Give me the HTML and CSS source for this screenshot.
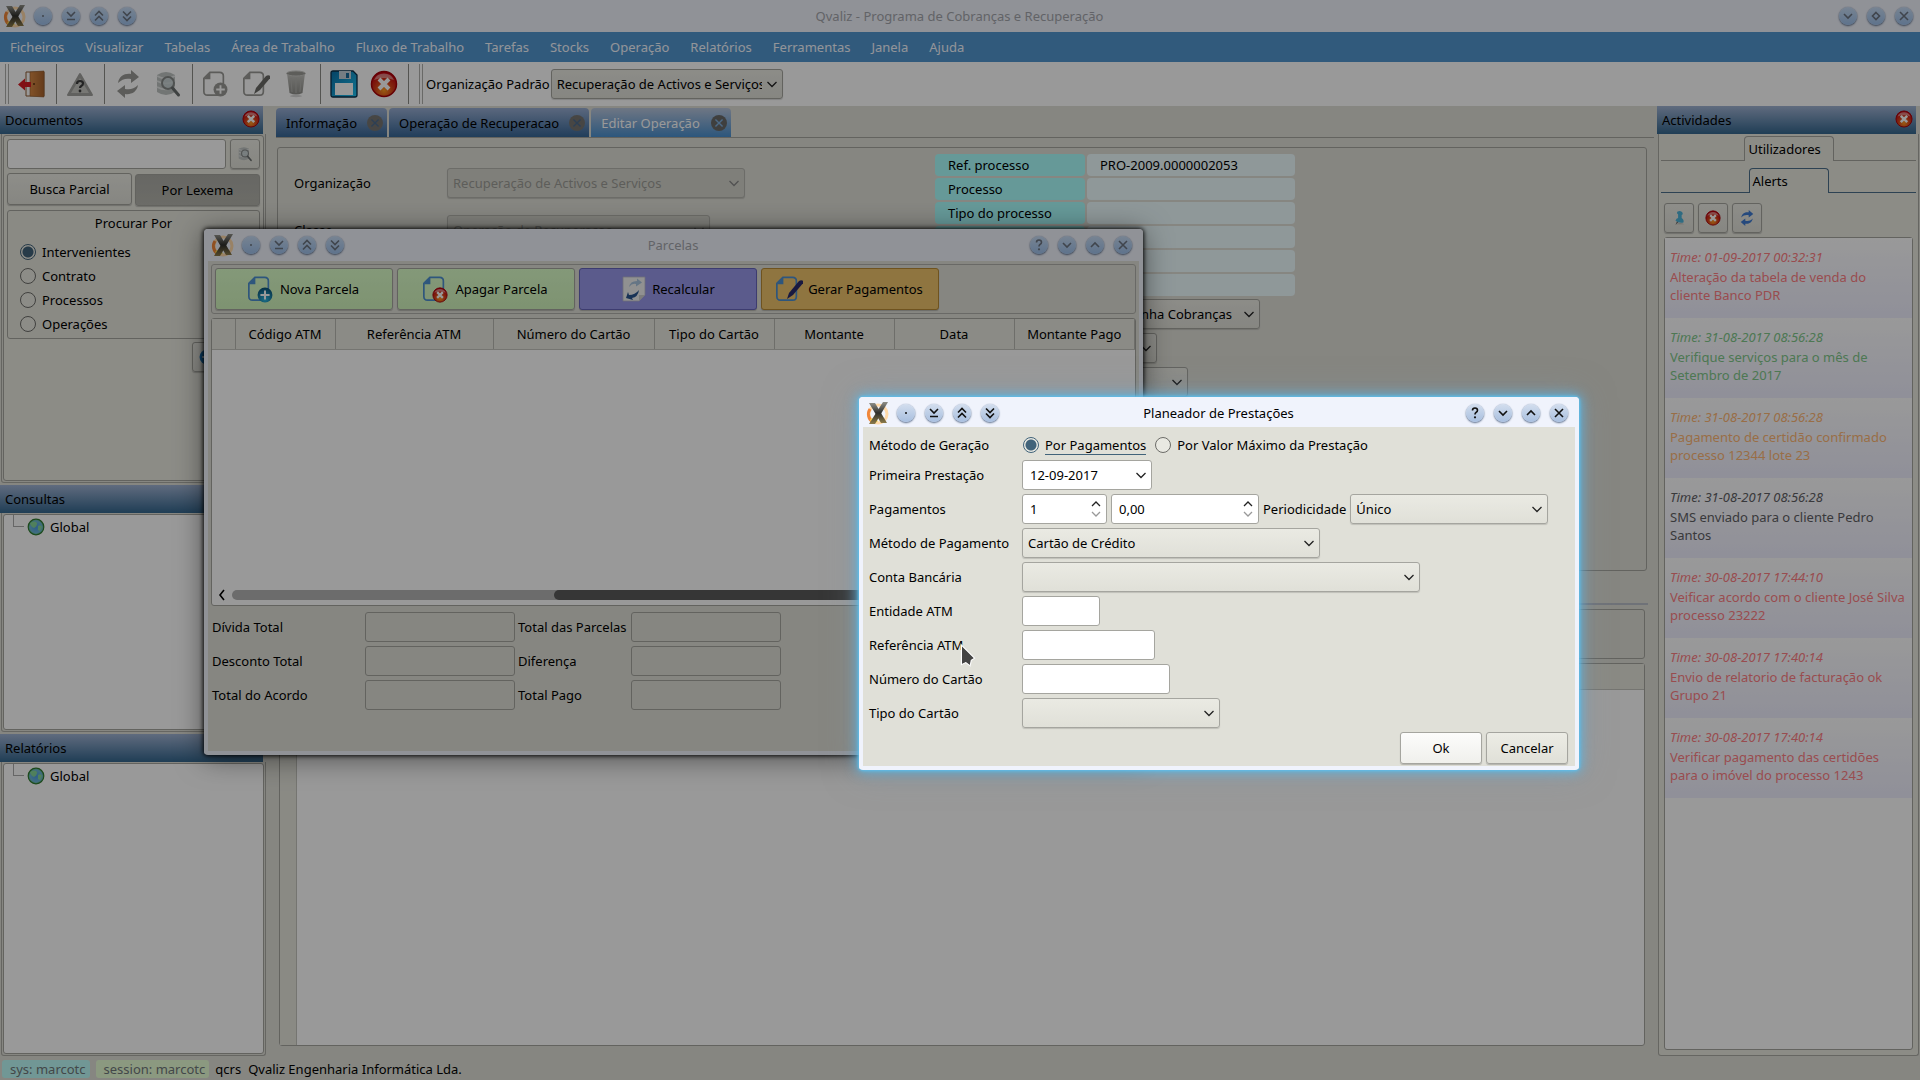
FILE: index.html
```html
<!DOCTYPE html>
<html lang="pt">
<head>
<meta charset="utf-8">
<title>Qvaliz - Programa de Cobranças e Recuperação</title>
<link rel="stylesheet" href="styles.css">
</head>
<body>
<svg class="sprite" aria-hidden="true">
  <defs>
    <linearGradient id="g-door" x1="0" x2="1"><stop offset="0" stop-color="#d98a45"/><stop offset="1" stop-color="#a8632c"/></linearGradient>
    <linearGradient id="g-grey" x1="0" y1="0" x2="0" y2="1"><stop offset="0" stop-color="#c4c4c0"/><stop offset="1" stop-color="#8f8f8b"/></linearGradient>
    <linearGradient id="g-save" x1="0" y1="0" x2="1" y2="1"><stop offset="0" stop-color="#0a6fa8"/><stop offset="1" stop-color="#1fc4f2"/></linearGradient>
    <radialGradient id="g-red" cx=".5" cy=".75" r=".7"><stop offset="0" stop-color="#ff9a20"/><stop offset=".5" stop-color="#d8401a"/><stop offset="1" stop-color="#c00010"/></radialGradient>
    <radialGradient id="g-plus" cx=".5" cy=".8" r=".8"><stop offset="0" stop-color="#2fb8e0"/><stop offset="1" stop-color="#0a4f74"/></radialGradient>
    <linearGradient id="g-x" x1="0" y1="0" x2="0" y2="1"><stop offset="0" stop-color="#8f8f88"/><stop offset=".5" stop-color="#2f2f2c"/><stop offset="1" stop-color="#8c7b4a"/></linearGradient>
    <radialGradient id="g-globe" cx=".5" cy=".5" r=".6"><stop offset="0" stop-color="#4b9be8"/><stop offset=".6" stop-color="#6ab4d8"/><stop offset="1" stop-color="#5cc050"/></radialGradient>
  </defs>
  <symbol id="logo" viewBox="0 0 24 24"><circle cx="12" cy="13" r="9" fill="none" stroke="#ffd9a8" stroke-width="3"/><path d="M4 8a9 9 0 0 0 3 13" fill="none" stroke="#f0863a" stroke-width="3"/><path d="M5 18l3 3 3-2" fill="none" stroke="#f8d84a" stroke-width="3"/><path d="M3 2h6l12 20h-6z" fill="url(#g-x)"/><path d="M17 1h5L9 23H3z" fill="url(#g-x)"/></symbol>
  <symbol id="w-dot" viewBox="0 0 18 18"><circle cx="9" cy="9" r="1" fill="currentColor"/></symbol>
  <symbol id="w-keep" viewBox="0 0 18 18"><path d="M5 5l4 4 4-4M5 12.500h8" class="ln"/></symbol>
  <symbol id="w-up2" viewBox="0 0 18 18"><path d="M5 8.500l4-4 4 4M5 13.500l4-4 4 4" class="ln"/></symbol>
  <symbol id="w-down2" viewBox="0 0 18 18"><path d="M5 4.500l4 4 4-4M5 9.500l4 4 4-4" class="ln"/></symbol>
  <symbol id="w-help" viewBox="0 0 18 18"><path d="M6.500 6.500q0-2.500 2.500-2.500t2.500 2.300q0 1.500-1.500 2.200-1 .7-1 2" class="ln"/><circle cx="9" cy="13.300" r="1.100" fill="currentColor"/></symbol>
  <symbol id="w-down" viewBox="0 0 18 18"><path d="M5 7l4 4 4-4" class="ln"/></symbol>
  <symbol id="w-up" viewBox="0 0 18 18"><path d="M5 11l4-4 4 4" class="ln"/></symbol>
  <symbol id="w-rest" viewBox="0 0 18 18"><path d="M9 5.500l3.500 3.500-3.500 3.500-3.500-3.500z" class="ln"/></symbol>
  <symbol id="w-close" viewBox="0 0 18 18"><path d="M5 5l8 8M13 5l-8 8" class="ln"/></symbol>
  <symbol id="exit" viewBox="0 0 28 28"><path d="M8 2h18v24H8z" fill="#fff" stroke="#8e5a30"/><path d="M12 2l14-1v26l-14-1z" fill="url(#g-door)" stroke="#8e5a30" stroke-width=".6"/><circle cx="16" cy="14" r="1" fill="#5a3010"/><path d="M0 14.500l7-6v3.500h6v5H7v3.500z" fill="#d81c24"/></symbol>
  <symbol id="warn" viewBox="0 0 28 28"><path d="M14 4L26 25H2z" fill="#a2a29e" stroke="#a2a29e" stroke-width="2" stroke-linejoin="round"/><path d="M14 8L23 23H5z" fill="#c6c6c2"/><path d="M11 14q0-3 3-3t3 2.600q0 1.600-1.700 2.400-1.300.8-1.300 2" fill="none" stroke="#3c3c3c" stroke-width="2.200"/><circle cx="14" cy="21" r="1.400" fill="#3c3c3c"/></symbol>
  <symbol id="sync" viewBox="0 0 28 28"><path d="M4 13C5 6 11 3 17 4V0l8 7-8 6V9c-5-1-9 0-13 4z"/><path d="M24 15c-1 7-7 10-13 9v4l-8-7 8-6v4c5 1 9 0 13-4z"/></symbol>
  <symbol id="db" viewBox="0 0 28 28"><path d="M3 5q9-6 18 0v17q-9 6-18 0z" fill="#bfc3c2"/><path d="M3 11q9 5 18 0M3 17q9 5 18 0M3 6q9 5 18 0" fill="none" stroke="#e4e7e6" stroke-width="1.500"/><circle cx="14" cy="13" r="6" fill="#c9d5d6" fill-opacity=".8" stroke="#858988" stroke-width="2"/><path d="M18.500 18l6 7" stroke="#6a6e6e" stroke-width="3" stroke-linecap="round"/></symbol>
  <symbol id="page" viewBox="0 0 28 28"><path d="M8.500 1.500H19q4 0 4 4V22q0 4-4 4H6q-4 0-4-4V8z" fill="none" stroke="currentColor" stroke-width="1.800"/><path d="M9 1v8H2z" fill="currentColor"/></symbol>
  <symbol id="pen" viewBox="0 0 28 28"><path d="M12 24l2-6L24 6q3-2 5 1L18 20z"/></symbol>
  <symbol id="trash" viewBox="0 0 28 28"><path d="M5 3h18l-2.500 20q-6.500 3-13 0z" fill="url(#g-grey)"/><ellipse cx="14" cy="3.500" rx="9.500" ry="2.500" fill="#9b9b97" stroke="#c9c9c5"/><path d="M9 8l1 14M14 8v15M19 8l-1 14" stroke="#b4b4b0" fill="none"/><ellipse cx="14" cy="26" rx="6" ry="1.200" fill="#d8d8d8"/></symbol>
  <symbol id="save" viewBox="0 0 28 28"><path d="M3 1h20l4 4v20q0 2-2 2H3q-2 0-2-2V3q0-2 2-2z" fill="url(#g-save)" stroke="#0b2f4a" stroke-width="1.300"/><path d="M9 1h12v8H9z" fill="#c5d0da"/><path d="M16 3h3v5h-3z" fill="#1c6a9a"/><path d="M5 13h18v12H5z" fill="#fff"/></symbol>
  <symbol id="stop" viewBox="0 0 28 28"><circle cx="14" cy="14" r="12.500" fill="url(#g-red)" stroke="#a80008" stroke-width="1.500"/><path d="M4 10a11 11 0 0 1 20 0q-10-4-20 0z" fill="#fff" opacity=".45"/><path d="M9 9l10 10M19 9L9 19" stroke="#fff" stroke-width="4"/></symbol>
  <symbol id="plus" viewBox="0 0 28 28"><circle cx="14" cy="14" r="13"/><path d="M14 6v16M6 14h16" stroke="#fff" stroke-width="3.500"/></symbol>
  <symbol id="recalc" viewBox="0 0 28 28"><path d="M4 2h22v18l-6 6H4z" fill="#f2f2f2" stroke="#b8b8c8" stroke-width=".8"/><path d="M20 26v-6h6z" fill="#cfcfcf"/><path d="M10 12q1-6 8-6V3.500l5 4-6 4V9q-4-1-7 3z" fill="#a9c3de"/><path d="M20 15q-1 7-7 8l1 2-7-2 2-6 1 3q6 0 10-5z" fill="#2a5590"/></symbol>
  <symbol id="pin" viewBox="0 0 18 18"><path d="M5 17l2-5 2 1z" fill="#666"/><path d="M6 16q4-2 9 0z" fill="#b4b4ae"/><path d="M7 2q4-2 6 1 1 2-1 2.500V9q3 2 2 5-5 1-9-2 1-3 3-3V5Q6 4 7 2z" fill="#4db2d8"/></symbol>
  <symbol id="globe" viewBox="0 0 18 18"><circle cx="9" cy="9" r="7.800" fill="url(#g-globe)" stroke="#2f7a2f" stroke-width="1.200"/><path d="M3 5q5-3 7 0 0 4-3 5-3-1-4-5zM11 8q3-2 4 1l-2 4-2-1z" fill="#8fe08a" opacity=".8"/></symbol>
</svg>

<div class="desktop">
  <div class="app">
    <header class="titlebar">
      <svg class="logo"><use href="#logo"/></svg>
      <button class="wb" aria-label="Desktop"><svg><use href="#w-dot"/></svg></button>
      <button class="wb" aria-label="Manter abaixo"><svg><use href="#w-keep"/></svg></button>
      <button class="wb" aria-label="Manter acima"><svg><use href="#w-up2"/></svg></button>
      <button class="wb" aria-label="Enrolar"><svg><use href="#w-down2"/></svg></button>
      <h1 class="title">Qvaliz - Programa de Cobranças e Recuperação</h1>
      <span class="wb-space"></span>
      <button class="wb" aria-label="Minimizar"><svg><use href="#w-down"/></svg></button>
      <button class="wb" aria-label="Restaurar"><svg><use href="#w-rest"/></svg></button>
      <button class="wb" aria-label="Fechar"><svg><use href="#w-close"/></svg></button>
    </header>
    <nav class="menubar">
      <a href="#">Ficheiros</a><a href="#">Visualizar</a><a href="#">Tabelas</a><a href="#">Área de Trabalho</a><a href="#">Fluxo de Trabalho</a><a href="#">Tarefas</a><a href="#">Stocks</a><a href="#">Operação</a><a href="#">Relatórios</a><a href="#">Ferramentas</a><a href="#">Janela</a><a href="#">Ajuda</a>
    </nav>
    <div class="toolbar">
      <span class="handle"></span>
      <button class="tool" aria-label="Sair"><svg><use href="#exit"/></svg></button>
      <span class="sep"></span>
      <button class="tool" aria-label="Ajuda"><svg><use href="#warn"/></svg></button>
      <span class="sep"></span>
      <button class="tool grey" aria-label="Actualizar"><svg><use href="#sync"/></svg></button>
      <button class="tool" aria-label="Pesquisar"><svg><use href="#db"/></svg></button>
      <span class="sep"></span>
      <button class="tool grey" aria-label="Novo"><svg viewBox="0 0 28 28"><use href="#page" width="26" height="28"/><use href="#plus" x="11" y="12" width="15" height="15"/></svg></button>
      <button class="tool grey" aria-label="Editar"><svg viewBox="0 0 28 28"><use href="#page" width="26" height="28"/><use href="#pen" class="pen" width="28" height="28"/></svg></button>
      <button class="tool" aria-label="Apagar"><svg><use href="#trash"/></svg></button>
      <span class="sep"></span>
      <button class="tool" aria-label="Gravar"><svg><use href="#save"/></svg></button>
      <button class="tool" aria-label="Cancelar"><svg><use href="#stop"/></svg></button>
      <span class="sep"></span>
      <span class="handle"></span>
      <label for="org-padrao">Organização Padrão</label>
      <select id="org-padrao" class="w-org"><option>Recuperação de Activos e Serviços</option></select>
    </div>

    <div class="workspace">
      <aside class="docks">
        <section class="dock dock-docs">
          <h2 class="dock-title">Documentos <button class="dock-close" aria-label="Fechar"><svg><use href="#stop"/></svg></button></h2>
          <div class="frame"><div class="inner docs">
            <div class="search"><input type="text" aria-label="Pesquisa"><button class="btn icon-btn" aria-label="Pesquisar"><svg><use href="#db"/></svg></button></div>
            <div class="modes"><button class="btn">Busca Parcial</button><button class="btn pressed">Por Lexema</button></div>
            <div class="group" role="radiogroup" aria-labelledby="procurar">
              <p id="procurar" class="group-title">Procurar Por</p>
              <label class="radio"><input type="radio" name="por" checked>Intervenientes</label>
              <label class="radio"><input type="radio" name="por">Contrato</label>
              <label class="radio"><input type="radio" name="por">Processos</label>
              <label class="radio"><input type="radio" name="por">Operações</label>
            </div>
            <button class="btn go" aria-label="Procurar"><svg><use href="#plus"/></svg></button>
          </div></div>
        </section>
        <section class="dock dock-cons">
          <h2 class="dock-title">Consultas</h2>
          <div class="frame"><div class="inner tree"><span class="branch"></span><svg class="globe"><use href="#globe"/></svg>Global</div></div>
        </section>
        <section class="dock dock-rel">
          <h2 class="dock-title">Relatórios</h2>
          <div class="frame"><div class="inner tree"><span class="branch"></span><svg class="globe"><use href="#globe"/></svg>Global</div></div>
        </section>
      </aside>

      <main class="editor">
        <div class="tabs">
          <div class="tab">Informação <button class="tab-x" aria-label="Fechar separador"><svg><use href="#w-close"/></svg></button></div>
          <div class="tab">Operação de Recuperacao <button class="tab-x" aria-label="Fechar separador"><svg><use href="#w-close"/></svg></button></div>
          <div class="tab active">Editar Operação <button class="tab-x" aria-label="Fechar separador"><svg><use href="#w-close"/></svg></button></div>
        </div>
        <section class="form-box">
          <div class="form-left">
            <label for="organizacao">Organização</label>
            <select id="organizacao" class="w-298" disabled><option>Recuperação de Activos e Serviços</option></select>
            <label for="classe">Classe</label>
            <select id="classe" class="w-263" disabled><option>Operação de Recuperacao</option></select>
          </div>
          <div class="form-right">
            <dl class="refs">
              <dt>Ref. processo</dt><dd>PRO-2009.0000002053</dd>
              <dt>Processo</dt><dd></dd>
              <dt>Tipo do processo</dt><dd></dd>
              <dt></dt><dd></dd>
              <dt></dt><dd></dd>
              <dt></dt><dd></dd>
            </dl>
            <div class="stack">
              <select class="w-168" aria-label="Campanha"><option>Campanha Cobranças</option></select>
              <select class="w-65" aria-label="Estado"><option></option></select>
              <select class="w-96" aria-label="Fase"><option></option></select>
            </div>
          </div>
        </section>
        <div class="rule"></div>
        <div class="strip"></div>
        <div class="sheet"><div class="sheet-head"></div><div class="sheet-body"></div></div>
      </main>

      <aside class="dock activities">
        <h2 class="dock-title">Actividades <button class="dock-close" aria-label="Fechar"><svg><use href="#stop"/></svg></button></h2>
        <div class="frame act-body">
          <div class="toolbox"><button class="tb-tab tb-users">Utilizadores</button></div>
          <div class="toolbox on"><button class="tb-tab tb-alerts">Alerts</button></div>
          <div class="act-tools">
            <button class="btn icon-btn" aria-label="Fixar"><svg><use href="#pin"/></svg></button>
            <button class="btn icon-btn" aria-label="Remover"><svg><use href="#stop"/></svg></button>
            <button class="btn icon-btn blue" aria-label="Actualizar"><svg><use href="#sync"/></svg></button>
          </div>
          <ul class="alerts">
            <li class="red"><em>Time: 01-09-2017 00:32:31</em>Alteração da tabela de venda do cliente Banco PDR</li>
            <li class="green"><em>Time: 31-08-2017 08:56:28</em>Verifique serviços para o mês de Setembro de 2017</li>
            <li class="orange"><em>Time: 31-08-2017 08:56:28</em>Pagamento de certidão confirmado processo 12344 lote 23</li>
            <li class="dark"><em>Time: 31-08-2017 08:56:28</em>SMS enviado para o cliente Pedro Santos</li>
            <li class="red"><em>Time: 30-08-2017 17:44:10</em>Veificar acordo com o cliente José Silva processo 23222</li>
            <li class="red"><em>Time: 30-08-2017 17:40:14</em>Envio de relatorio de facturação ok Grupo 21</li>
            <li class="red"><em>Time: 30-08-2017 17:40:14</em>Verificar pagamento das certidões para o imóvel do processo 1243</li>
          </ul>
        </div>
      </aside>
    </div>

    <footer class="status">
      <span class="chip sys">sys: marcotc</span><span class="chip session">session: marcotc</span><span>qcrs</span><span>Qvaliz Engenharia Informática Lda.</span>
    </footer>
  </div>

  <section class="window parcelas" aria-label="Parcelas">
    <header class="titlebar">
      <svg class="logo"><use href="#logo"/></svg>
      <button class="wb" aria-label="Desktop"><svg><use href="#w-dot"/></svg></button>
      <button class="wb" aria-label="Manter abaixo"><svg><use href="#w-keep"/></svg></button>
      <button class="wb" aria-label="Manter acima"><svg><use href="#w-up2"/></svg></button>
      <button class="wb" aria-label="Enrolar"><svg><use href="#w-down2"/></svg></button>
      <h2 class="title">Parcelas</h2>
      <button class="wb" aria-label="Ajuda"><svg><use href="#w-help"/></svg></button>
      <button class="wb" aria-label="Minimizar"><svg><use href="#w-down"/></svg></button>
      <button class="wb" aria-label="Maximizar"><svg><use href="#w-up"/></svg></button>
      <button class="wb" aria-label="Fechar"><svg><use href="#w-close"/></svg></button>
    </header>
    <div class="window-body">
      <div class="actions">
        <button class="btn big lime"><svg viewBox="0 0 28 28"><use href="#page" width="26" height="28"/><use href="#plus" class="plus-blue" x="10" y="12" width="16" height="16"/></svg>Nova Parcela</button>
        <button class="btn big lime"><svg viewBox="0 0 28 28"><use href="#page" width="26" height="28"/><use href="#stop" x="10" y="12" width="16" height="16"/></svg>Apagar Parcela</button>
        <button class="btn big violet"><svg><use href="#recalc"/></svg>Recalcular</button>
        <button class="btn big amber"><svg viewBox="0 0 28 28"><use href="#page" width="26" height="28"/><use href="#pen" class="pen-navy" width="28" height="28"/></svg>Gerar Pagamentos</button>
      </div>
      <div class="grid-box">
        <table class="grid">
          <colgroup><col class="c-23"><col class="c-100"><col class="c-158"><col class="c-161"><col class="c-120"><col class="c-120"><col class="c-120"><col></colgroup>
          <thead><tr><th></th><th>Código ATM</th><th>Referência ATM</th><th>Número do Cartão</th><th>Tipo do Cartão</th><th>Montante</th><th>Data</th><th>Montante Pago</th></tr></thead>
        </table>
        <div class="scroll"><svg viewBox="0 0 10 14"><path d="M7 2L3 7l4 5" class="ln"/></svg><div class="track"><div class="thumb"></div></div></div>
      </div>
      <div class="totals">
        <label for="t1">Dívida Total</label><input id="t1" type="text" readonly>
        <label for="t2">Total das Parcelas</label><input id="t2" type="text" readonly>
        <label for="t3">Desconto Total</label><input id="t3" type="text" readonly>
        <label for="t4">Diferença</label><input id="t4" type="text" readonly>
        <label for="t5">Total do Acordo</label><input id="t5" type="text" readonly>
        <label for="t6">Total Pago</label><input id="t6" type="text" readonly>
      </div>
    </div>
  </section>

  <div class="backdrop"></div>

  <section class="window planner" role="dialog" aria-label="Planeador de Prestações">
    <header class="titlebar">
      <svg class="logo"><use href="#logo"/></svg>
      <button class="wb" aria-label="Desktop"><svg><use href="#w-dot"/></svg></button>
      <button class="wb" aria-label="Manter abaixo"><svg><use href="#w-keep"/></svg></button>
      <button class="wb" aria-label="Manter acima"><svg><use href="#w-up2"/></svg></button>
      <button class="wb" aria-label="Enrolar"><svg><use href="#w-down2"/></svg></button>
      <h2 class="title">Planeador de Prestações</h2>
      <button class="wb" aria-label="Ajuda"><svg><use href="#w-help"/></svg></button>
      <button class="wb" aria-label="Minimizar"><svg><use href="#w-down"/></svg></button>
      <button class="wb" aria-label="Maximizar"><svg><use href="#w-up"/></svg></button>
      <button class="wb" aria-label="Fechar"><svg><use href="#w-close"/></svg></button>
    </header>
    <form class="window-body plan">
      <div class="prow first"><span class="plabel">Método de Geração</span>
        <label class="radio focus"><input type="radio" name="metodo" checked><span>Por Pagamentos</span></label>
        <label class="radio"><input type="radio" name="metodo"><span>Por Valor Máximo da Prestação</span></label></div>
      <div class="prow"><label class="plabel" for="p-data">Primeira Prestação</label><input id="p-data" class="w-130 date" type="text" value="12-09-2017"></div>
      <div class="prow"><label class="plabel" for="p-num">Pagamentos</label>
        <input id="p-num" class="w-85 spin" type="text" value="1"><input class="w-148 spin" type="text" value="0,00" aria-label="Valor">
        <label for="p-per">Periodicidade</label><select id="p-per" class="w-198"><option>Único</option></select></div>
      <div class="prow"><label class="plabel" for="p-met">Método de Pagamento</label><select id="p-met" class="w-298"><option>Cartão de Crédito</option></select></div>
      <div class="prow"><label class="plabel" for="p-conta">Conta Bancária</label><select id="p-conta" class="w-398"><option></option></select></div>
      <div class="prow"><label class="plabel" for="p-ent">Entidade ATM</label><input id="p-ent" class="w-78" type="text"></div>
      <div class="prow"><label class="plabel" for="p-ref">Referência ATM</label><input id="p-ref" class="w-133" type="text"></div>
      <div class="prow"><label class="plabel" for="p-cart">Número do Cartão</label><input id="p-cart" class="w-148" type="text"></div>
      <div class="prow"><label class="plabel" for="p-tipo">Tipo do Cartão</label><select id="p-tipo" class="w-198"><option></option></select></div>
      <div class="pbuttons"><button type="button" class="btn primary">Ok</button><button type="button" class="btn">Cancelar</button></div>
    </form>
    <svg class="cursor" viewBox="0 0 14 22"><path d="M1 1v18l4-2 4 3 1-5 3-2z" fill="#444" stroke="#fff" stroke-width="1"/></svg>
  </section>
</div>
</body>
</html>
```
FILE: styles.css
```css
* { box-sizing: border-box; }
body { margin: 0; font: 13px/18px "Noto Sans", sans-serif; color: #000; background: #e0e0d8; }
h1, h2, p, ul, dl, dd { margin: 0; padding: 0; font: inherit; }
button, input, select { font: inherit; color: inherit; margin: 0; }
svg { display: block; }
.sprite { position: absolute; width: 0; height: 0; }
.ln { fill: none; stroke: currentColor; stroke-width: 1.6; }

.desktop { position: relative; min-height: 100vh; overflow: hidden; }
.app { display: flex; flex-direction: column; min-height: 100vh; }
.backdrop { position: absolute; inset: 0; background: rgba(0, 0, 0, .4); }

/* controls */
.btn { border: 1px solid #a5a59f; border-radius: 3px; background: linear-gradient(#ecece5, #e0e0d8); box-shadow: 0 1px 1px rgba(0, 0, 0, .2); padding: 0; }
.btn.primary { background: linear-gradient(#fcfcfb, #f0f0ec); }
.btn.pressed { background: linear-gradient(#acaca6, #b4b4ad); margin-top: 1px; }
input[type=text] { height: 30px; border: 1px solid #a5a59f; border-radius: 3px; background-color: #fff; padding: 0 7px; }
input[type=text][readonly] { background: transparent; }
select { appearance: none; height: 30px; border: 1px solid #a5a59f; border-radius: 3px; padding: 0 20px 0 5px; text-overflow: clip;
  background: url("data:image/svg+xml,%3Csvg xmlns='http://www.w3.org/2000/svg' width='12' height='12'%3E%3Cpath d='M1.500 4L6 8.500L10.500 4' fill='none' stroke='%23222' stroke-width='1.300'/%3E%3C/svg%3E") no-repeat right 4px center, linear-gradient(#eaeae3, #e0e0d8); box-shadow: 0 1px 1px rgba(0, 0, 0, .15); }
select:disabled { color: #9c9c96; opacity: 1; border-color: #b4b4ae; background-color: #d4d4cc; background-image: url("data:image/svg+xml,%3Csvg xmlns='http://www.w3.org/2000/svg' width='12' height='12'%3E%3Cpath d='M1.500 4L6 8.500L10.500 4' fill='none' stroke='%23888' stroke-width='1.300'/%3E%3C/svg%3E"); }
.date { background: url("data:image/svg+xml,%3Csvg xmlns='http://www.w3.org/2000/svg' width='12' height='12'%3E%3Cpath d='M1.500 4L6 8.500L10.500 4' fill='none' stroke='%23222' stroke-width='1.300'/%3E%3C/svg%3E") no-repeat right 4px center; }
.spin { background: url("data:image/svg+xml,%3Csvg xmlns='http://www.w3.org/2000/svg' width='12' height='20'%3E%3Cpath d='M2 7L6 3L10 7' fill='none' stroke='%23222' stroke-width='1.300'/%3E%3Cpath d='M2 13L6 17L10 13' fill='none' stroke='%23999' stroke-width='1.300'/%3E%3C/svg%3E") no-repeat right 4px center; }
.radio { display: flex; align-items: center; gap: 6px; height: 24px; }
.radio input { appearance: none; width: 16px; height: 16px; border: 1px solid #6c6c68; border-radius: 50%; background: #e9e9e2; }
.radio input:checked { border-color: #41637a; background: radial-gradient(circle, #41637a 5px, #e9e9e2 6px); }

/* title bars */
.titlebar { display: flex; align-items: center; gap: 10px; height: 32px; padding: 0 7px 0 3px; background: #f0f3fc; color: #a4a6ac; }
.logo { width: 24px; height: 24px; margin-right: -3px; }
.title { flex: 1; text-align: center; }
.window .title { padding-right: 28px; }
.wb { width: 18px; height: 18px; padding: 0; border: 0; border-radius: 50%; background: linear-gradient(#c8dcf4, #9dc0ea); color: #6c7480; box-shadow: 0 1px 2px #5c6f8c, 0 0 1px #8fa4c0; }
.wb svg { width: 18px; height: 18px; }
.wb-space { width: 46px; }

.menubar { display: flex; gap: 21px; height: 30px; padding: 0 10px; align-items: center; background: #5296cf; }
.menubar a { color: #f4f8ff; text-decoration: none; }

.toolbar { display: flex; align-items: center; height: 44px; background: #fff; }
.tool { width: 40px; height: 40px; padding: 6px; border: 0; background: none; }
.tool svg { width: 28px; height: 28px; }
.grey { color: #9a9a96; fill: #9a9a96; }
.pen { fill: #6a6a66; }
.sep { width: 8px; height: 40px; background: linear-gradient(#8c8c88, #8c8c88) no-repeat 4px 0 / 1px 100%; }
.handle { width: 4px; height: 40px; margin: 0 3px 0 5px; border: solid #b0b0ac; border-width: 0 1px; }
.sep + .handle { margin-left: 7px; }
.w-org { width: 232px; margin-left: 1px; }

/* docks */
.workspace { flex: 1; display: grid; grid-template-columns: 266px 1fr 263px; }
.docks { display: flex; flex-direction: column; gap: 2px; }
.dock { display: flex; flex-direction: column; min-height: 0; }
.dock-docs { flex: 377 1 0; }
.dock-cons { flex: 247 1 0; }
.dock-rel { flex: 322 1 0; }
.dock-title { display: flex; justify-content: space-between; height: 28px; padding: 5px 3px 5px 5px; margin-right: 3px; background: linear-gradient(#a0b3d3, #35678e); }
.dock-close { width: 18px; height: 18px; padding: 0; margin-top: -1px; border: 0; background: none; }
.dock-close svg { width: 18px; height: 18px; }
.frame { flex: 1; margin: 0 0 0 1px; padding: 1px; border: 1px solid #aaaaa4; border-top: 0; border-radius: 0 0 3px 3px; display: flex; }
.inner { flex: 1; border: 1px solid #a5a59f; border-radius: 3px; }
.docs { padding: 3px 3px 0; background: #e9e9e0; }
.search { display: flex; gap: 4px; }
.search input { flex: 1; min-width: 0; }
.icon-btn { width: 30px; height: 30px; display: grid; place-items: center; }
.icon-btn svg { width: 16px; height: 16px; }
.blue { fill: #3f7ad0; }
.modes { display: flex; gap: 3px; margin-top: 4px; }
.modes .btn { flex: 1; height: 32px; }
.group { margin-top: 4px; height: 129px; padding: 3px 12px; border: 1px solid #a5a59f; border-radius: 3px; background: #e6e6dd; }
.group-title { text-align: center; height: 26px; }
.go { display: block; width: 64px; height: 30px; margin: 3px 0 0 185px; padding: 0 6px; }
.go svg { width: 16px; height: 16px; fill: #1470b8; }
.tree { display: flex; gap: 3px; background: #fff; padding: 3px 0 0 9px; }
.branch { width: 11px; height: 12px; margin-top: -3px; border: solid #aaa; border-width: 0 0 1px 1px; }
.globe { width: 18px; height: 18px; margin-right: 2px; }

/* editor */
.editor { display: flex; flex-direction: column; padding: 2px 3px 10px 10px; }
.tabs { display: flex; gap: 2px; height: 30px; border-bottom: 1px solid #a5a59f; }
.tab { display: flex; align-items: center; gap: 10px; padding: 0 4px 0 10px; border-radius: 4px 4px 0 0; background: linear-gradient(#98add2, #376797); }
.tab.active { color: #fff; gap: 11px; background: linear-gradient(#b9c6dc, #4b90cf); }
.tab-x { width: 16px; height: 16px; padding: 0; border: 0; border-radius: 50%; background: #777672; color: #4c6a8c; }
.active .tab-x { background: #6a6a68; color: #7fb0e0; }
.tab-x svg { width: 16px; height: 16px; }
.form-box { margin: 9px 7px 0 1px; height: 424px; padding-left: 16px; border: 1px solid #a5a59f; border-radius: 3px; display: grid; grid-template-columns: 641px 1fr; }
.form-left { display: grid; grid-template-columns: 153px 1fr; grid-auto-rows: 30px; row-gap: 17px; padding-top: 20px; align-items: center; }
.refs { display: grid; grid-template-columns: 150px 208px; grid-auto-rows: 22px; gap: 2px; padding-top: 6px; }
.refs dt, .refs dd { padding: 2px 13px; border-radius: 4px; background: #aafffe; }
.refs dd { background: #eefdff; }
.stack { display: flex; flex-direction: column; gap: 4px; margin: 3px 0 0 157px; }
.rule { height: 2px; margin: 32px 6px 4px 1px; background: #b9bec8; }
.strip { height: 50px; margin: 0 9px 4px 3px; border: 1px solid #a5a59f; border-radius: 3px; }
.sheet { flex: 1; display: flex; flex-direction: column; margin: 0 9px 0 3px; border: 1px solid #a5a59f; border-radius: 3px; background: #fff; }
.sheet-head { height: 26px; background: #e6e6dd; border-bottom: 1px solid #c4c4bd; }
.sheet-body { flex: 1; border-left: 16px solid #e6e6dd; box-shadow: inset 1px 0 #c4c4bd; }

/* activities */
.activities .frame { flex-direction: column; margin-right: 1px; padding: 2px 2px 5px; background: #e9e9e0; }
.activities .dock-title { margin-right: 4px; }
.toolbox { display: flex; height: 25px; margin-bottom: 7px; color: #a5a59f; }
.toolbox::before, .toolbox::after { content: ""; flex: 1; border-bottom: 1px solid; }
.toolbox.on { color: #4c6f8a; margin-bottom: 10px; }
.tb-tab { width: 90px; padding: 0 4px; text-align: left; background: none; border: 1px solid #a5a59f; border-bottom: 0; border-radius: 4px 4px 0 0; color: #000; }
.tb-alerts { width: 80px; padding: 0 3px; border-color: #4c6f8a; }
.act-tools { display: flex; gap: 4px; margin: 0 3px 4px; }
.alerts { flex: 1; margin: 0 3px; list-style: none; background: #fff; border: 1px solid #a5a59f; border-radius: 3px; }
.alerts li { height: 80px; padding: 10px 4px 0 5px; background: linear-gradient(#fff, #f0f0ff); }
.alerts em { display: block; margin-bottom: 2px; }
.red { color: #ff7f84; }
.green { color: #80c88a; }
.orange { color: #ffb775; }
.dark { color: #606064; }

.status { display: flex; align-items: center; height: 24px; padding: 2px 0 0 2px; }
.chip { padding: 0 4px 0 8px; margin-right: 6px; border-radius: 3px; color: #70787a; }
.sys { background: #bcfcf8; }
.session { background: #e8ffd6; }
.status span:last-child { margin-left: 7px; }

/* windows */
.window { position: absolute; display: flex; flex-direction: column; border: solid #f0f3fc; border-width: 0 4px 4px; border-radius: 4px; background: #e0e0d8; }
.window .titlebar { margin: 0 -4px; padding: 0 11px 0 7px; border-radius: 4px 4px 0 0; }
.window-body { flex: 1; display: flex; flex-direction: column; }
.parcelas { left: 204px; top: 229px; width: 939px; height: 526px; box-shadow: 0 0 4px 1px rgba(0, 0, 0, .9), 0 3px 28px rgba(0, 0, 0, .5); }
.parcelas .window-body { padding: 3px; }
.actions { display: flex; gap: 4px; padding: 3px; border: 1px solid #b0b0aa; border-radius: 3px; margin-bottom: 4px; }
.big { display: flex; align-items: center; justify-content: center; gap: 5px; width: 178px; height: 42px; padding-right: 2px; color: #000; }
.big svg { width: 28px; height: 28px; color: #4d8fd0; }
.lime { background: linear-gradient(#dcffca, #d2f5bd); }
.violet { background: #9898ea; border-color: #6664bb; }
.amber { background: #eec36c; border-color: #b98a35; }
.plus-blue { fill: url(#g-plus); }
.pen-navy { fill: #2b2b6c; }
.grid-box { display: flex; flex-direction: column; height: 288px; border: 1px solid #a5a59f; border-radius: 3px; background: #fff; }
.grid { width: 100%; table-layout: fixed; border-collapse: collapse; }
.grid th { height: 30px; padding: 0; font-weight: 400; background: #e8e8df; border-right: 1px solid #b8b8b1; border-bottom: 1px solid #c4c4bd; }
.c-23 { width: 23px; }
.c-100 { width: 100px; }
.c-158 { width: 158px; }
.c-161 { width: 161px; }
.c-120 { width: 120px; }
.scroll { display: flex; align-items: center; gap: 5px; margin-top: auto; padding: 0 20px 3px 5px; }
.scroll svg { width: 10px; height: 14px; }
.track { flex: 1; height: 10px; border-radius: 5px; background: #b4b4b4; }
.thumb { height: 10px; margin-left: 322px; border-radius: 5px; background: #5a5a5a; }
.totals { display: grid; grid-template-columns: 150px 150px 110px 150px; column-gap: 3px; row-gap: 4px; align-items: center; margin: 6px 0 0 1px; }
.totals label { white-space: nowrap; }

.planner { left: 859px; top: 397px; width: 720px; height: 373px; box-shadow: 0 0 3px 1px #5cc0ee, 0 0 12px 3px rgba(90, 185, 235, .75), 0 0 34px rgba(130, 150, 170, .5); }
.planner .titlebar { padding-top: 2px; color: #000; }
.planner .wb { color: #111; background: linear-gradient(#d3deee, #a8bfdf); }
.plan { gap: 4px; padding: 7px 7px 2px 6px; }
.prow { display: flex; align-items: center; gap: 4px; height: 30px; }
.prow.first { height: 22px; gap: 9px; }
.plabel { width: 149px; }
.first .plabel { width: 145px; }
.focus span { box-shadow: 0 1px #41637a; }
.pbuttons { display: flex; justify-content: flex-end; gap: 4px; margin-top: auto; }
.pbuttons .btn { width: 82px; height: 32px; }
.cursor { position: absolute; left: 97px; top: 247px; width: 16px; height: 24px; }

.w-65 { width: 65px; }
.w-78 { width: 78px; }
.w-85 { width: 85px; }
.w-96 { width: 96px; }
.w-130 { width: 130px; }
.w-133 { width: 133px; }
.w-148 { width: 148px; }
.w-168 { width: 168px; }
.w-198 { width: 198px; }
.w-263 { width: 263px; }
.w-298 { width: 298px; }
.w-398 { width: 398px; }
```
